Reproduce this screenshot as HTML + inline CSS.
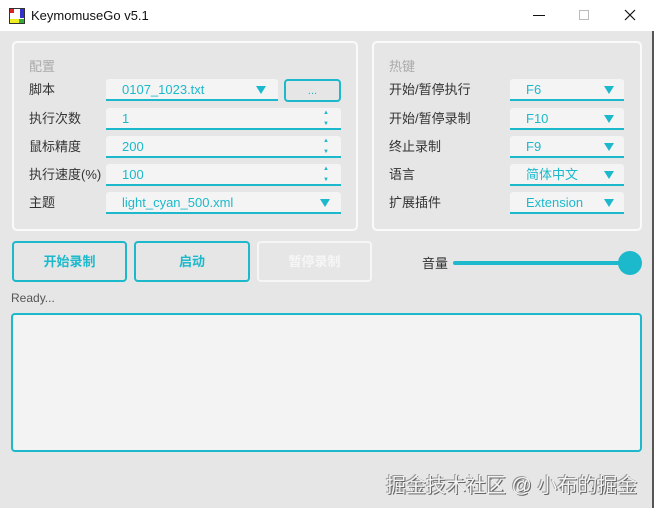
<!DOCTYPE html>
<html><head><meta charset="utf-8"><style>
*{box-sizing:border-box;margin:0;padding:0}
body{width:654px;height:508px;background:#e6e6e6;font-family:"Liberation Sans","Noto Sans CJK SC",sans-serif;position:relative;overflow:hidden;color:#333}
.a{position:absolute}
.tb{left:0;top:0;width:654px;height:31px;background:#fff}
.grp{border:2px solid #fafafa;border-radius:5px}
.lbl{font-size:13px;color:#333;line-height:16px}
.gt{font-size:13px;color:#aaa}
.f{background:#f4f4f4;border-bottom:2px solid #1cb9cc;border-radius:3px 3px 0 0;height:22px;color:#1cb9cc;font-size:13px;line-height:22px;padding-left:16px}
.arr{position:absolute;right:10px;top:7px;width:0;height:0;border-left:5px solid transparent;border-right:5px solid transparent;border-top:8px solid #1cb9cc}
.sp{position:absolute;right:12px;font-size:6px;color:#1cb9cc;line-height:6px}
.btn{border:2px solid #1cb9cc;border-radius:4px;height:41px;color:#1cb9cc;font-size:13px;font-weight:bold;text-align:center;line-height:37px}
</style></head><body>
<div class="a" style="right:0;top:0;width:2px;height:508px;background:#555"></div>
<div class="a tb"></div>
<svg class="a" style="left:9px;top:8px" width="16" height="16"><rect x="0.5" y="0.5" width="15" height="15" fill="#fff" stroke="#333"/><rect x="1" y="1" width="4" height="4" fill="#d22"/><rect x="1" y="11" width="9" height="4" fill="#ee2"/><rect x="10" y="11" width="5" height="4" fill="#3a3"/><rect x="11" y="1" width="4" height="9" fill="#33c"/></svg>
<div class="a" style="left:31px;top:8px;font-size:13px;color:#111">KeymomuseGo v5.1</div>
<div class="a" style="left:533px;top:15px;width:12px;height:1px;background:#111"></div>
<div class="a" style="left:579px;top:10px;width:10px;height:10px;border:1px solid #bbb"></div>
<svg class="a" style="left:624px;top:9px" width="12" height="12"><path d="M1 1L11 11M11 1L1 11" stroke="#111" stroke-width="1.2"/></svg>

<div class="a grp" style="left:12px;top:41px;width:346px;height:190px"></div>
<div class="a gt" style="left:29px;top:56px">配置</div>
<div class="a lbl" style="left:29px;top:82px">脚本</div>
<div class="a lbl" style="left:29px;top:111px">执行次数</div>
<div class="a lbl" style="left:29px;top:139px">鼠标精度</div>
<div class="a lbl" style="left:29px;top:167px">执行速度(%)</div>
<div class="a lbl" style="left:29px;top:195px">主题</div>
<div class="a f" style="left:106px;top:79px;width:172px">0107_1023.txt<span class="arr" style="right:12px"></span></div>
<div class="a" style="left:284px;top:79px;width:57px;height:23px;border:2px solid #1cb9cc;border-radius:4px;color:#1cb9cc;font-size:11px;text-align:center;line-height:20px">...</div>
<div class="a f" style="left:106px;top:108px;width:235px">1<span class="sp" style="top:2px">▲</span><span class="sp" style="top:13px">▼</span></div>
<div class="a f" style="left:106px;top:136px;width:235px">200<span class="sp" style="top:2px">▲</span><span class="sp" style="top:13px">▼</span></div>
<div class="a f" style="left:106px;top:164px;width:235px">100<span class="sp" style="top:2px">▲</span><span class="sp" style="top:13px">▼</span></div>
<div class="a f" style="left:106px;top:192px;width:235px">light_cyan_500.xml<span class="arr" style="right:11px"></span></div>

<div class="a grp" style="left:372px;top:41px;width:270px;height:190px"></div>
<div class="a gt" style="left:389px;top:56px">热键</div>
<div class="a lbl" style="left:389px;top:82px">开始/暂停执行</div>
<div class="a lbl" style="left:389px;top:111px">开始/暂停录制</div>
<div class="a lbl" style="left:389px;top:139px">终止录制</div>
<div class="a lbl" style="left:389px;top:167px">语言</div>
<div class="a lbl" style="left:389px;top:195px">扩展插件</div>
<div class="a f" style="left:510px;top:79px;width:114px">F6<span class="arr"></span></div>
<div class="a f" style="left:510px;top:108px;width:114px">F10<span class="arr"></span></div>
<div class="a f" style="left:510px;top:136px;width:114px">F9<span class="arr"></span></div>
<div class="a f" style="left:510px;top:164px;width:114px">简体中文<span class="arr"></span></div>
<div class="a f" style="left:510px;top:192px;width:114px">Extension<span class="arr"></span></div>

<div class="a btn" style="left:12px;top:241px;width:115px">开始录制</div>
<div class="a btn" style="left:134px;top:241px;width:116px">启动</div>
<div class="a btn" style="left:257px;top:241px;width:115px;border-color:#f6f6f6;color:#f6f6f6">暂停录制</div>
<div class="a lbl" style="left:422px;top:256px">音量</div>
<div class="a" style="left:453px;top:261px;width:175px;height:4px;background:#1cb9cc;border-radius:2px"></div>
<div class="a" style="left:618px;top:251px;width:24px;height:24px;border-radius:50%;background:#1cb9cc"></div>
<div class="a" style="left:11px;top:291px;font-size:12px;color:#555">Ready...</div>
<div class="a" style="left:11px;top:313px;width:631px;height:139px;border:2px solid #1cb9cc;border-radius:4px;background:#f3f3f3"></div>
<div class="a" style="left:386px;top:469px;font-size:20px;color:#f4f4f4;text-shadow:1px 1px 0 #666,-1px -1px 0 #999">掘金技术社区 @ 小布的掘金</div>
</body></html>
